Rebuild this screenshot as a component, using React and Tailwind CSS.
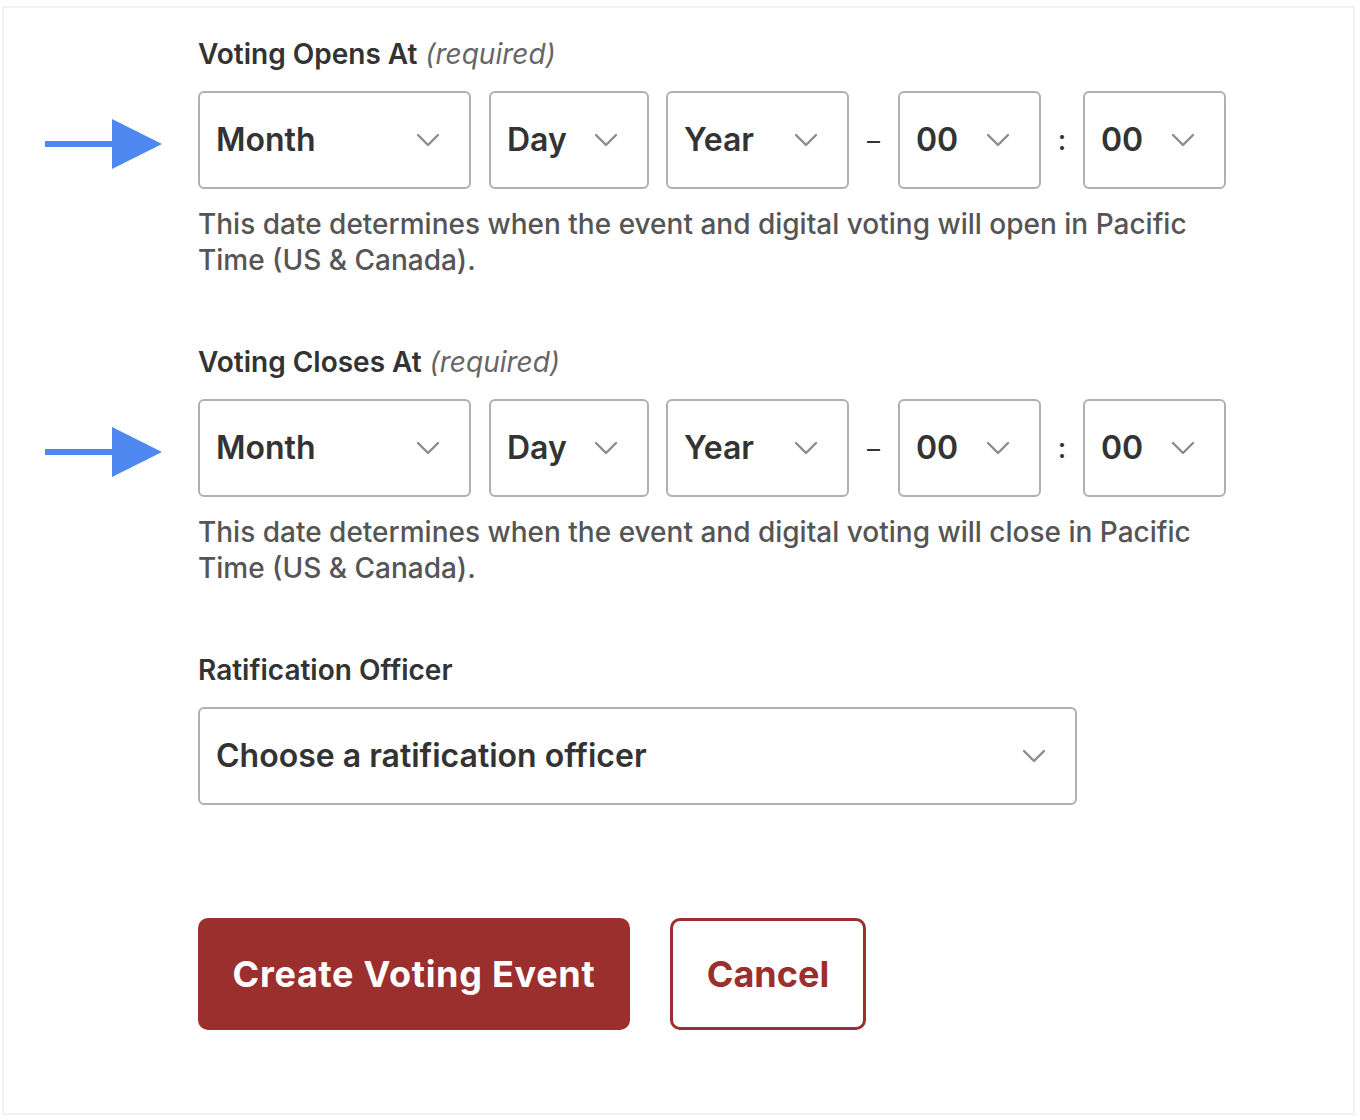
import React from 'react';

const font = { fontFamily: 'Inter, "Noto Sans", sans-serif' };

function Chevron() {
  return (
    <svg width="24" height="14" viewBox="0 0 24 14" fill="none" className="shrink-0">
      <path d="M2 2l10 10L22 2" stroke="#8c8c8c" strokeWidth="2.4" strokeLinecap="round" strokeLinejoin="round" />
    </svg>
  );
}

function Arrow() {
  return (
    <svg width="117" height="50" viewBox="0 0 117 50">
      <rect x="0" y="22" width="70" height="6" fill="#4f87f0" />
      <polygon points="67,0 117,25 67,50" fill="#4f87f0" />
    </svg>
  );
}

function SelectBox({ label, width }) {
  return (
    <div className={`${width} h-[98px] flex items-center justify-between pl-[16px] pr-[29px] border-2 border-[#b0b0b0] rounded-[6px] bg-white`}>
      <span className="text-[32px] font-semibold text-[#333]">{label}</span>
      <Chevron />
    </div>
  );
}

function DateRow() {
  return (
    <div className="flex items-center">
      <SelectBox label="Month" width="w-[273px]" />
      <div className="w-[18px]" />
      <SelectBox label="Day" width="w-[160px]" />
      <div className="w-[17px]" />
      <SelectBox label="Year" width="w-[183px]" />
      <div className="w-[49px] flex justify-center text-[26px] text-[#333]">–</div>
      <SelectBox label="00" width="w-[143px]" />
      <div className="w-[42px] flex justify-center text-[28px] font-medium text-[#333]">:</div>
      <SelectBox label="00" width="w-[143px]" />
    </div>
  );
}

function DateField({ title, verb }) {
  return (
    <div className="grid grid-cols-[153px_1fr]">
      <div />
      <div className="text-[28px] leading-[32px] text-[#333]">
        <span className="font-semibold">{title}</span> <span className="italic text-[#666]">(required)</span>
      </div>
      <div className="flex items-center pt-[8px] mt-[21px]">
        <Arrow />
      </div>
      <div className="mt-[21px]">
        <DateRow />
      </div>
      <div />
      <p className="mt-[17px] text-[28px] leading-[36px] font-medium text-[#555] max-w-[1010px]">
        This date determines when the event and digital voting will {verb} in Pacific Time (US &amp; Canada).
      </p>
    </div>
  );
}

export default function App() {
  return (
    <div className="bg-white min-h-[1120px] pt-[6px] pl-[2px]" style={font}>
      <div className="w-[1353px] h-[1109px] border-2 border-[#f2f2f2] pl-[41px] pt-[30px]">
        <DateField title="Voting Opens At" verb="open" />
        <div className="mt-[68px]">
          <DateField title="Voting Closes At" verb="close" />
        </div>
        <div className="ml-[153px] mt-[68px]">
          <div className="text-[28px] leading-[32px] font-semibold text-[#333]">Ratification Officer</div>
          <div className="mt-[21px] w-[879px] h-[98px] flex items-center justify-between pl-[16px] pr-[29px] border-2 border-[#b0b0b0] rounded-[6px]">
            <span className="text-[32px] font-semibold text-[#333]">Choose a ratification officer</span>
            <Chevron />
          </div>
          <div className="mt-[113px] flex items-center gap-[40px]">
            <button className="w-[432px] h-[112px] rounded-[10px] bg-[#9b2f2e] text-white text-[36px] font-bold tracking-[0.02em]">
              Create Voting Event
            </button>
            <button className="w-[196px] h-[112px] rounded-[10px] border-[3px] border-[#9b2f2e] bg-white text-[#9b2f2e] text-[36px] font-bold">
              Cancel
            </button>
          </div>
        </div>
      </div>
    </div>
  );
}
